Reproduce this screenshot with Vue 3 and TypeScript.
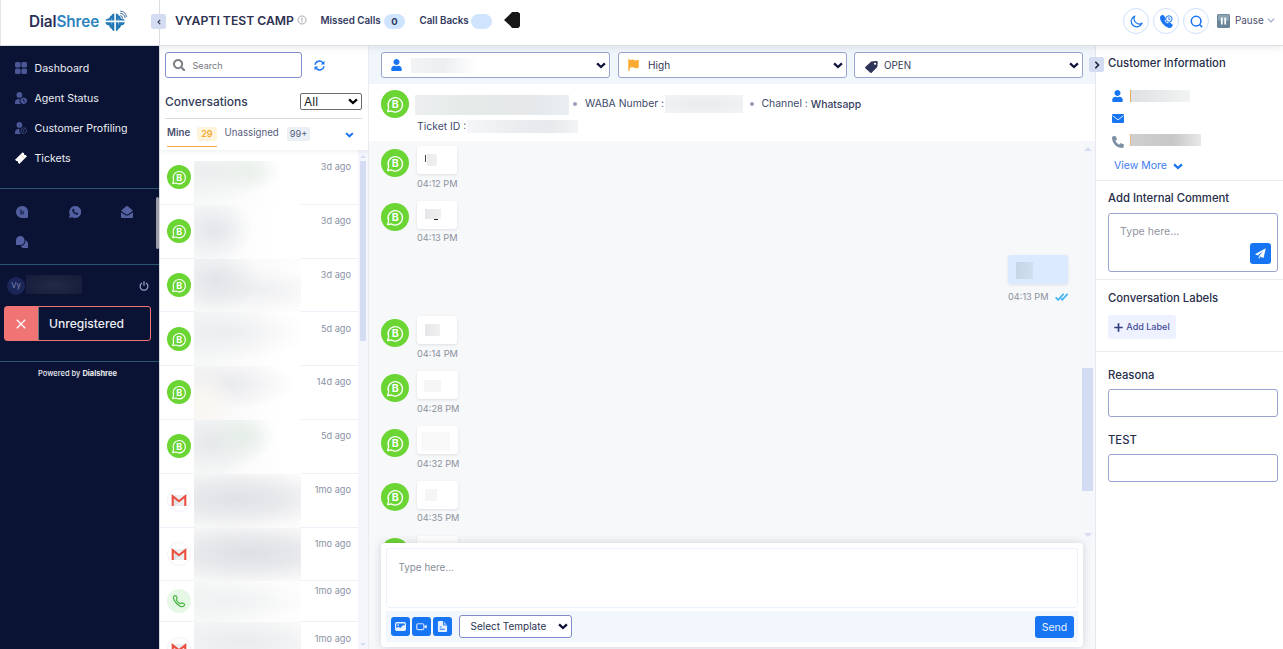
<script setup lang="ts">
interface NavItem { label: string; icon: string }
interface Conversation { kind: 'wab' | 'gmail' | 'phone'; ago: string; tone: string }
interface Message { time?: string; out?: boolean; mask: string }

const nav: NavItem[] = [
  { label: 'Dashboard', icon: 'i-grid' },
  { label: 'Agent Status', icon: 'i-agent' },
  { label: 'Customer Profiling', icon: 'i-profile' },
  { label: 'Tickets', icon: 'i-ticket' },
]
const channels = ['i-blog', 'i-wa', 'i-mailopen', 'i-chats']

const conversations: Conversation[] = [
  { kind: 'wab', ago: '3d ago', tone: 't1' },
  { kind: 'wab', ago: '3d ago', tone: 't2' },
  { kind: 'wab', ago: '3d ago', tone: 't3' },
  { kind: 'wab', ago: '5d ago', tone: 't4' },
  { kind: 'wab', ago: '14d ago', tone: 't5' },
  { kind: 'wab', ago: '5d ago', tone: 't6' },
  { kind: 'gmail', ago: '1mo ago', tone: 't7' },
  { kind: 'gmail', ago: '1mo ago', tone: 't8' },
  { kind: 'phone', ago: '1mo ago', tone: 't9' },
  { kind: 'gmail', ago: '1mo ago', tone: 't10' },
]

const messages: Message[] = [
  { time: '04:12 PM', mask: 'm1' },
  { time: '04:13 PM', mask: 'm2' },
  { time: '04:13 PM', out: true, mask: 'm3' },
  { time: '04:14 PM', mask: 'm4' },
  { time: '04:28 PM', mask: 'm5' },
  { time: '04:32 PM', mask: 'm6' },
  { time: '04:35 PM', mask: 'm7' },
  { mask: 'm5' },
]
</script>

<template>
  <div class="app">
    <svg class="defs" aria-hidden="true">
      <symbol id="i-grid" viewBox="0 0 12 12"><rect width="5.6" height="5.6" rx="1.6" /><rect x="6.4" width="5.6" height="5.6" rx="1.6" /><rect y="6.4" width="5.6" height="5.6" rx="1.6" /><rect x="6.4" y="6.4" width="5.6" height="5.6" rx="1.6" /></symbol>
      <symbol id="i-agent" viewBox="0 0 12 12"><circle cx="4.4" cy="2.9" r="2.9" /><path d="M0 12V10.2C0 8 1.8 6.7 4.6 6.7c-.6 2 0 4 1.4 5.3z" /><path fill-rule="evenodd" d="M8.7 5.4a3.3 3.3 0 1 0 .01 0zM8.2 7h.9v1.7l1.2.7-.4.7-1.7-1z" /></symbol>
      <symbol id="i-profile" viewBox="0 0 12 12"><circle cx="4.4" cy="2.9" r="2.9" /><path d="M0 12V10.2C0 8 1.8 6.7 4.6 6.7c-.6 2 0 4 1.4 5.3z" /><circle cx="8.8" cy="8.6" r="2.7" fill="none" stroke="currentColor" stroke-width=".9" stroke-dasharray="3.4 .6" /><path d="M8.8 7.1v1.7l-1.2.6" fill="none" stroke="currentColor" stroke-width=".8" /></symbol>
      <symbol id="i-ticket" viewBox="0 0 12 12"><path d="M0 7.8 7.7.2l1.4 1.3a1.2 1.2 0 0 0 1.5 1.5L12 4.2 4.3 11.9 3 10.6a1.2 1.2 0 0 0-1.6-1.5z" /><path d="m5.4 2.6 4 4" stroke="#e58b6a" stroke-width=".7" stroke-dasharray="1.2 .7" /></symbol>
      <symbol id="i-blog" viewBox="0 0 12 12"><path d="M6 0h.5A5.6 5.6 0 0 1 12 6v5a1 1 0 0 1-1 1H6A6 6 0 0 1 6 0z" /><path d="M3.8 3.2h1.900v1.800h2.400v3.500H3.800z" fill="#2c3769" /></symbol>
      <symbol id="i-wa" viewBox="0 0 12 12"><path d="M6.1 0a6 6 0 1 1-2.8 11.2L0 12l.9-3.2A6 6 0 0 1 6.1 0z" /><path d="M4 2.9c.5-.3.9-.2 1.1.3l.4 1c.1.4-.5.8-.4 1 .4.8 1 1.4 1.9 1.8.3.1.6-.7 1-.5l1.1.6c.4.3-.2 1.6-1.1 1.7C5.800 9 3 6.200 3.200 4.300c0-.6.3-1.100.8-1.400z" fill="#101a3c" /></symbol>
      <symbol id="i-mailopen" viewBox="0 0 12 12"><path d="M0 4.700 4.800.6a1.800 1.800 0 0 1 2.400 0L12 4.700 7 8.200a1.800 1.800 0 0 1-2 0z" /><path d="M0 6.200 4.600 9.300a2.500 2.500 0 0 0 2.800 0L12 6.200V11a1 1 0 0 1-1 1H1a1 1 0 0 1-1-1z" /></symbol>
      <symbol id="i-chats" viewBox="0 0 12 12"><path d="M4.300 0a4.300 4.500 0 0 1 0 9H.6a.6.6 0 0 1-.6-.6V4.500A4.300 4.500 0 0 1 4.300 0z" /><path d="M9.400 4.300c1.600.5 2.600 2 2.600 3.700v3.400a.6.6 0 0 1-.6.6H8.200c-1.600 0-2.700-.8-3.300-2.100 2.800-.1 4.700-2.500 4.500-5.600z" /></symbol>
      <symbol id="i-user" viewBox="0 0 448 512"><path d="M224 256c70.700 0 128-57.300 128-128S294.700 0 224 0 96 57.300 96 128s57.300 128 128 128zm89.600 32h-16.700c-22.200 10.200-46.900 16-72.900 16s-50.600-5.800-72.900-16h-16.700C60.200 288 0 348.200 0 422.400V464c0 26.500 21.500 48 48 48h352c26.500 0 48-21.500 48-48v-41.600c0-74.200-60.200-134.400-134.400-134.400z" /></symbol>
      <symbol id="i-search" viewBox="0 0 512 512"><path d="M505 442.700L405.300 343c-4.500-4.500-10.600-7-17-7H372c27.600-35.300 44-79.700 44-128C416 93.100 322.900 0 208 0S0 93.100 0 208s93.100 208 208 208c48.300 0 92.700-16.400 128-44v16.300c0 6.400 2.500 12.500 7 17l99.700 99.700c9.400 9.400 24.600 9.400 33.900 0l28.300-28.300c9.400-9.400 9.400-24.600.1-34zM208 336c-70.700 0-128-57.200-128-128 0-70.700 57.200-128 128-128 70.700 0 128 57.200 128 128 0 70.700-57.200 128-128 128z" /></symbol>
      <symbol id="i-phone" viewBox="0 0 512 512"><path d="M164.900 24.600c-7.700-18.600-28-28.500-47.400-23.200l-88 24C12.100 30.200 0 46 0 64C0 311.400 200.600 512 448 512c18 0 33.800-12.100 38.600-29.500l24-88c5.300-19.400-4.600-39.700-23.200-47.400l-96-40c-16.300-6.800-35.200-2.100-46.300 11.600L304.700 368C234.300 334.700 177.300 277.700 144 207.300L193.300 167c13.700-11.200 18.400-30 11.600-46.300l-40-96z" /></symbol>
      <symbol id="i-flag" viewBox="0 0 448 512"><path d="M64 32C64 14.300 49.700 0 32 0S0 14.300 0 32V480c0 17.700 14.300 32 32 32s32-14.300 32-32V378l64.300-16.100c41.100-10.300 84.600-5.500 122.500 13.400c44.200 22.100 95.500 24.800 141.700 7.400l34.700-13c12.500-4.700 20.800-16.600 20.800-30V66.100c0-23-24.200-38-44.800-27.700l-9.600 4.800c-46.300 23.200-100.800 23.200-147.100 0c-35.100-17.600-75.400-22-113.500-12.500L64 48V32z" /></symbol>
      <symbol id="i-tag" viewBox="0 0 13 12"><path fill-rule="evenodd" d="M6.300.5 11.400 0c.9 0 1.300.5 1.300 1.300l-.4 4.800-5.400 5.500c-.6.6-1.200.6-1.800 0L.5 7.400C0 6.900 0 6.200.5 5.700zM10 1.700a1 1 0 1 0 .01 0z" /></symbol>
      <symbol id="i-down" viewBox="0 0 10 7"><path d="m1.100 1.300 3.900 3.700 3.900-3.700" fill="none" stroke="currentColor" stroke-width="2.300" /></symbol>
      <symbol id="i-wab" viewBox="0 0 28 28"><circle cx="14" cy="14" r="14" fill="#6bd534" /><path d="M7.700 17.700A7.200 7.200 0 1 1 10.600 21L6.600 21.700z" fill="none" stroke="#fff" stroke-width="1.300" stroke-linejoin="round" /><text x="14.200" y="18.300" text-anchor="middle" font-family="Inter, sans-serif" font-size="10.500" font-weight="700" fill="#fff">B</text></symbol>
      <symbol id="i-gmail" viewBox="0 0 24 24"><circle cx="12" cy="12" r="11.500" fill="#fff" stroke="#f1f1fb" /><path d="M5 7h14v11H5z" fill="#eceff1" /><path d="m5 8 7 5.500L8 18H5z" fill="#dfe3e6" /><path d="M5.700 18V8.200l6.300 5 6.300-5V18" fill="none" stroke="#ea4f40" stroke-width="2.100" /></symbol>
      <symbol id="i-call" viewBox="0 0 24 24"><circle cx="12" cy="12" r="12" fill="#e6f8e5" /><path d="M7 7.200c.9-.9 1.900-.9 2.300 0l.8 1.700c.3.700-1 1.400-.7 2 .8 1.700 2 2.900 3.700 3.700.6.3 1.300-1 2-.7l1.900.9c.8.400.8 1.300 0 2.100-1 1-2.700.9-4.300 0-2.300-1.200-4-2.900-5.300-5.300-.9-1.700-1.300-3.500-.4-4.400z" fill="none" stroke="#4cb648" stroke-width="1.200" /></symbol>
    </svg>

    <header class="top">
      <div class="brand">
        <span class="name">Dial<b>Shree</b></span>
        <svg class="mark" viewBox="0 0 22 22">
          <path d="M9.300 3.500v7.100H.4c.2-1.600 2-2.200 3.900-2.200.2-1.800 1-2.800 2.300-3 .3-1.200 1.300-1.900 2.700-1.900zM10.900 3.500c1.400 0 2.400.7 2.700 1.900 1.300.2 2.100 1.200 2.300 3 1.900 0 3.700.6 3.900 2.200h-8.900zM.4 12.200h8.900v8.700c-1.400 0-2.400-.7-2.700-2.400-1.300-.2-2.100-1.200-2.300-3C2.400 15.500.6 14.300.4 12.200zM19.800 12.200h-8.900v8.700c1.400 0 2.400-.7 2.700-2.400 1.300-.2 2.100-1.200 2.300-3 1.900 0 3.700-1.200 3.900-3.300z" fill="#2279b5" />
          <path d="M6.700 8.500v2.100M13.500 8.500v2.100M6.700 12.200v2.300M13.500 12.200v2.300" stroke="#9cc8e6" stroke-width=".7" />
          <path d="M15.200 5.700a2.400 2.400 0 0 1 2.400 2.400M15.200 3.300A4.800 4.800 0 0 1 20 8.100M15.200 1a7 7 0 0 1 6.300 6" fill="none" stroke="#2d5f8f" stroke-width=".9" />
        </svg>
      </div>
      <button class="toggle left"><svg viewBox="0 0 6 8"><path d="M4.200 1.800 2 4l2.200 2.200" fill="none" stroke="#3c3f55" stroke-width="1.200" /></svg></button>
      <h1>VYAPTI TEST CAMP</h1>
      <svg class="info" viewBox="0 0 10 10"><circle cx="5" cy="5" r="4" fill="none" stroke="#9a9ba5" stroke-width="1" stroke-dasharray="2.600 .5" /><path d="M5 2.600v3.200M5 6.500v1" stroke="#9a9ba5" stroke-width="1" /></svg>
      <span class="stat missed">Missed Calls</span><span class="pill">0</span>
      <span class="stat backs">Call Backs</span><span class="pill"></span>
      <svg class="blob" viewBox="0 0 16 16"><path d="M0 8 6.500 1.700 8 0h6l2 1.500V14l-1.500 2H8l-1.500-2z" fill="#171717" /></svg>
      <div class="spacer"></div>
      <button class="round"><svg viewBox="0 0 14 14"><path d="M5.200 1.100A6 6 0 1 0 13 8.700 5.600 5.600 0 0 1 5.200 1.100z" fill="none" stroke="#1b74f0" stroke-width="1.300" stroke-linejoin="round" /></svg></button>
      <button class="round"><svg viewBox="0 0 14 14"><path d="M3.900.8C3.500.2 2.900.1 2.300.4L1 1.300C.4 1.800.3 2.600.5 3.600 1.600 8.400 5.200 12.400 10 13.500c1 .2 1.800 0 2.300-.7l.8-1.200c.4-.6.200-1.200-.4-1.600L10.600 8.600c-.5-.3-1.100-.2-1.500.2l-.8.900C6.600 8.800 5.300 7.400 4.400 5.700l.9-.8c.4-.4.5-1 .2-1.500z" fill="#1774f2" stroke="#1774f2" stroke-width="1" /><circle cx="9.600" cy="4.300" r="3.500" fill="#e6f0ff" stroke="#1774f2" stroke-width="1" /><path d="M9.500 2.400v2.100l1.500.6" fill="none" stroke="#1774f2" stroke-width=".9" /></svg></button>
      <button class="round"><svg viewBox="0 0 14 14"><circle cx="6.600" cy="6.600" r="5.200" fill="none" stroke="#1b74f0" stroke-width="1.700" /><path d="m10.200 10.200 2.900 2.900" stroke="#1b74f0" stroke-width="1.700" /></svg></button>
      <svg class="pause" viewBox="0 0 13 14"><rect width="13" height="14" rx="1.500" fill="#6b8598" /><rect x="1" y=".8" width="11" height="6" rx="1" fill="#8ba3b3" /><path d="M4.800 3.500v7M8.200 3.500v7" stroke="#fff" stroke-width="1.800" /></svg>
      <span class="ptext">Pause</span>
      <svg class="pchev" viewBox="0 0 8 5"><path d="m.8.7 3.200 3.200L7.200.7" fill="none" stroke="#98a7c6" stroke-width="1.200" /></svg>
    </header>

    <div class="body">
      <aside class="side">
        <nav>
          <a v-for="n in nav" :key="n.label" :class="{ lit: n.icon === 'i-ticket' }"><svg><use :href="'#' + n.icon" /></svg>{{ n.label }}</a>
        </nav>
        <div class="channels">
          <svg v-for="c in channels" :key="c"><use :href="'#' + c" /></svg>
          <i class="sbar"></i>
        </div>
        <div class="account">
          <span class="avatar">Vy</span><span class="uname"></span>
          <svg class="power" viewBox="0 0 10 10"><path d="M3 1.900a3.900 3.900 0 1 0 4 0M5 .3v4.500" fill="none" stroke="#9ba3d2" stroke-width="1.200" /></svg>
        </div>
        <div class="unreg">
          <span class="x"><svg viewBox="0 0 10 10"><path d="m.8.8 8.400 8.400M9.200.8.8 9.200" stroke="#fff" stroke-width="1.300" /></svg></span>
          <span class="ulabel">Unregistered</span>
        </div>
        <div class="powered">Powered by <b>Dialshree</b></div>
      </aside>

      <section class="list">
        <div class="searchrow">
          <div class="search"><svg><use href="#i-search" /></svg>Search</div>
          <svg class="sync" viewBox="0 0 12 12"><path d="M1.200 5.200A4.700 4.700 0 0 1 9.600 3M10.800 6.800A4.700 4.700 0 0 1 2.400 9" fill="none" stroke="#1774f2" stroke-width="1.600" /><path d="M11.400.8v4H7.400zM.6 11.200v-4h4z" fill="#1774f2" /></svg>
        </div>
        <div class="convhead"><span>Conversations</span><div class="allsel">All<svg><use href="#i-down" /></svg></div></div>
        <div class="tabs">
          <div class="tab on"><span>Mine</span><em>29</em></div>
          <div class="tab"><span>Unassigned</span><em>99+</em></div>
          <svg><use href="#i-down" /></svg>
        </div>
        <div class="convs">
          <div v-for="(c, i) in conversations" :key="i" class="conv" :class="c.kind">
            <svg v-if="c.kind === 'wab'"><use href="#i-wab" /></svg>
            <svg v-else-if="c.kind === 'gmail'"><use href="#i-gmail" /></svg>
            <svg v-else><use href="#i-call" /></svg>
            <div class="veil" :class="c.tone"></div>
            <time>{{ c.ago }}</time>
          </div>
          <div class="track"><i class="up"></i><i class="thumb"></i><i class="dn"></i></div>
        </div>
      </section>

      <main class="chat">
        <div class="filters">
          <div class="sel"><svg class="fi"><use href="#i-user" /></svg><span class="who"></span><svg class="dd"><use href="#i-down" /></svg></div>
          <div class="sel flag"><svg class="fi"><use href="#i-flag" /></svg>High<svg class="dd"><use href="#i-down" /></svg></div>
          <div class="sel tag"><svg class="fi"><use href="#i-tag" /></svg>OPEN<svg class="dd"><use href="#i-down" /></svg></div>
        </div>
        <div class="chead">
          <svg><use href="#i-wab" /></svg>
          <div>
            <div class="line1"><span class="cname"></span><i class="dot"></i><span class="waba">WABA Number :</span><span class="wnum"></span><i class="dot d2"></i><span>Channel : <b>Whatsapp</b></span></div>
            <div class="line2">Ticket ID :<span class="tid"></span></div>
          </div>
        </div>
        <div class="msgs">
          <div v-for="(m, i) in messages" :key="i" class="msg" :class="{ out: m.out }">
            <svg v-if="!m.out" class="av"><use href="#i-wab" /></svg>
            <div class="mcol">
              <div class="bubble" :class="{ wide: i > 3 }"><span class="mask" :class="m.mask"></span></div>
              <div v-if="m.time" class="mtime">{{ m.time }}<svg v-if="m.out" viewBox="0 0 13 8"><path d="m.6 4.400 2.500 2.500L8.700.9M6 5.500l1.200 1.300L12.600.9" fill="none" stroke="#3fb4ee" stroke-width="1.600" /></svg></div>
            </div>
          </div>
          <div class="ctrack"><i class="up"></i><i class="thumb"></i><i class="dn"></i></div>
        </div>
        <div class="composer">
          <div class="ta">Type here...</div>
          <div class="tools">
            <button class="tb"><svg viewBox="0 0 12 10"><path fill-rule="evenodd" d="M2 0h8a2 2 0 0 1 2 2v6a2 2 0 0 1-2 2H2a2 2 0 0 1-2-2V2a2 2 0 0 1 2-2zM1.400 7 3.800 5.300l2 1.200 2.800-3 2 .4V1.800H1.400zM3.400 2.600a.8.800 0 1 0 .01 0z" fill="#e6f0ff" /></svg></button>
            <button class="tb"><svg viewBox="0 0 12 10"><rect x=".8" y="2" width="7.800" height="6.400" rx="1.500" fill="none" stroke="#c9dcff" stroke-width="1.300" /><path d="m9.200 4.600 2.400-1.500v4.200L9.200 5.900z" fill="#fff" /></svg></button>
            <button class="tb"><svg viewBox="0 0 12 12"><path fill-rule="evenodd" d="M2.500 0h4v3.500c0 .9.500 1.400 1.400 1.400H11v5.600c0 .9-.6 1.500-1.500 1.500h-7C1.600 12 1 11.400 1 10.500v-9C1 .6 1.600 0 2.500 0zM3 6v1h2V6zm0 2.500v1h5.500v-1z" fill="#e6f0ff" /><path d="M7.500.5 10.700 4H7.500z" fill="#a9c8fb" /></svg></button>
            <div class="tpl">Select Template<svg><use href="#i-down" /></svg></div>
            <button class="send">Send</button>
          </div>
        </div>
      </main>

      <aside class="cust">
        <button class="toggle right"><svg viewBox="0 0 6 8"><path d="M1.300.8 4.500 4 1.300 7.200" fill="none" stroke="#1b1f3b" stroke-width="1.600" /></svg></button>
        <div class="sec s1">
          <h2>Customer Information</h2>
          <div class="crow"><svg class="cu"><use href="#i-user" /></svg><span class="v1"></span></div>
          <div class="crow"><svg class="ce" viewBox="0 0 12 9"><rect width="12" height="9" rx="1" fill="#1774f2" /><path d="m.6 1.800 5.400 4 5.400-4" fill="none" stroke="#d7e7ff" stroke-width="1" /></svg></div>
          <div class="crow"><svg class="cp"><use href="#i-phone" /></svg><span class="v2"></span></div>
          <a class="more">View More<svg><use href="#i-down" /></svg></a>
        </div>
        <div class="sec s2">
          <h2>Add Internal Comment</h2>
          <div class="cta">Type here...<button><svg viewBox="0 0 12 12"><path d="M11.800.2 0 6.900l3 1.300L9.300 2.900 4.500 8.800l4.800 2z M4.200 9v2.900l1.800-2.100z" fill="#fff" /></svg></button></div>
        </div>
        <div class="sec s3">
          <h2>Conversation Labels</h2>
          <button class="addl"><svg viewBox="0 0 9 9"><path d="M4.500.3v8.400M.3 4.500h8.400" stroke="#323d84" stroke-width="1.700" /></svg>Add Label</button>
        </div>
        <div class="s4">
          <h2>Reasona</h2><div class="inp"></div>
          <h2>TEST</h2><div class="inp"></div>
        </div>
      </aside>
    </div>
  </div>
</template>

<style>
html, body { margin: 0; overflow: hidden; background: #fff; }
</style>

<style scoped>
* { box-sizing: border-box; }
.app { width: 1283px; height: 649px; overflow: hidden; display: flex; flex-direction: column; font-family: Inter, sans-serif; font-size: 11px; color: #353d5c; background: #fff; }
.defs { position: absolute; width: 0; height: 0; }
svg { fill: currentColor; flex: none; display: block; }
button { border: 0; padding: 0; font: inherit; display: flex; align-items: center; justify-content: center; }
h1, h2 { margin: 0; }

.top { height: 46px; flex: none; position: relative; z-index: 3; display: flex; align-items: center; padding-bottom: 5px; background: #fff; border-bottom: 1px solid #dddee3; box-shadow: 0 1px 8px rgba(60, 64, 90, .13); }
.brand { width: 160px; height: 46px; margin-bottom: -5px; padding: 0 0 2px 28px; flex: none; display: flex; align-items: center; border-left: 1px solid #e4e4e8; border-right: 1px solid #dcdde2; }
.name { width: 72px; font-size: 15.300px; font-weight: 600; letter-spacing: -.1px; color: #2a3058; white-space: nowrap; }
.name b { font-weight: 600; color: #2d83c0; }
.mark { width: 22px; height: 22px; margin-left: 4px; margin-top: -1px; }
.toggle { position: absolute; width: 15px; height: 15px; border-radius: 2px; background: #d4dcf2; }
.toggle svg { width: 6px; height: 8px; }
.left { left: 151px; top: 14px; }
h1 { width: 121px; margin-left: 15px; font-size: 12.200px; font-weight: 600; color: #2d3250; white-space: nowrap; }
.info { width: 10px; height: 10px; margin-left: 1px; }
.stat { font-size: 9.800px; font-weight: 600; color: #343a5e; white-space: nowrap; }
.missed { width: 63.500px; margin-left: 13.500px; }
.backs { width: 51px; margin-left: 14.500px; }
.pill { width: 21px; height: 15px; border-radius: 8px; background: #cfe4ff; font-size: 9.500px; font-weight: 700; text-align: center; line-height: 15px; margin-top: 2px; }
.blob { width: 16px; height: 16px; margin-left: 12.500px; }
.spacer { flex: 1; }
.round { width: 26px; height: 26px; margin: 2px 0 0 4px; border: 1px solid #cfe1fb; border-radius: 50%; background: #fff; }
.round svg { width: 13px; height: 13px; }
.pause { width: 13px; height: 14px; margin: 2px 5px 0 8px; }
.ptext { width: 29px; font-size: 9.900px; color: #474d68; }
.pchev { width: 8px; height: 5px; margin: 1px 8px 0 3px; }

.body { flex: 1; min-height: 0; display: grid; grid-template-columns: 160px 209px 726px 188px; }

.side { background: #0a1333; border-right: 1px solid #d9dbe3; color: #eceef5; position: relative; z-index: 4; }
nav { height: 143px; padding-top: 7px; border-bottom: 1px solid #2a5673; }
nav a { height: 30px; padding-left: 15px; display: flex; align-items: center; gap: 7.500px; font-size: 10.600px; }
nav svg { width: 12px; height: 12px; color: #4b5796; }
nav .lit svg { color: #fff; }
.channels { height: 76px; position: relative; padding: 17px 0 0 16px; display: grid; grid-template-columns: 53px 52px 40px; grid-auto-rows: 30px; border-bottom: 1px solid #2a5673; color: #5361a2; }
.channels svg { width: 12px; height: 12px; }
.sbar { position: absolute; right: 0; top: 8px; width: 3px; height: 52px; border-radius: 2px; background: #9c9ca8; }
.account { height: 41px; padding-left: 7px; display: flex; align-items: center; }
.avatar { width: 18px; height: 18px; border-radius: 50%; background: #1b2658; color: #7c87bb; font-size: 7.700px; line-height: 18px; text-align: center; }
.uname { width: 56px; height: 19px; margin: -2px 0 0 1px; background: radial-gradient(ellipse at 50% 55%, #222a48, #151d3a 90%); }
.power { width: 10px; height: 10px; margin-left: 57px; }
.unreg { width: 147px; height: 35px; margin: 0 0 0 4px; border: 1px solid #f07474; border-radius: 3px; display: flex; align-items: stretch; }
.x { width: 34px; background: #f07474; display: flex; align-items: center; justify-content: center; border-right: 1px solid #6c7187; padding-right: 1px; }
.x svg { width: 10px; height: 10px; }
.ulabel { padding-left: 10px; font-size: 12.100px; line-height: 33px; font-weight: 500; }
.powered { margin-top: 20px; padding: 7px 4px 0 0; border-top: 1px solid #2a5673; font-size: 7.500px; line-height: 9px; text-align: center; white-space: nowrap; font-weight: 500; }
.powered b { font-weight: 700; }

.list { display: flex; flex-direction: column; min-height: 0; overflow: hidden; border-right: 1px solid #e9ebf0; background: #fff; }
.searchrow { height: 39px; padding: 6px 0 0 5px; display: flex; gap: 12px; }
.search { width: 137px; height: 26px; display: flex; align-items: center; gap: 7.500px; padding-left: 6.500px; border: 1px solid #8490c9; border-radius: 3px; color: #77797f; font-size: 9.100px; }
.search svg { width: 12.500px; height: 12.500px; color: #7d7f86; }
.sync { width: 11px; height: 11px; margin-top: 8px; }
.convhead { height: 34px; margin: 0 6px 0 5px; display: flex; align-items: center; justify-content: space-between; border-bottom: 1px solid #dcdde0; font-size: 12px; font-weight: 500; color: #333b59; flex: none; }
.allsel { width: 62px; height: 17px; padding: 0 3px; border: 1px solid #6c6c6c; border-radius: 2px; display: flex; align-items: center; justify-content: space-between; font-size: 12px; font-weight: 400; color: #222; }
.allsel svg { width: 10px; height: 7px; color: #000; }
.tabs { height: 31px; flex: none; padding: 0 7px; display: flex; gap: 8px; box-shadow: 0 2px 4px rgba(70, 80, 120, .08); position: relative; z-index: 1; font-size: 9.700px; color: #565d7d; }
.tab { height: 28px; display: flex; padding-top: 7px; line-height: 13px; gap: 8px; }
.tab.on { border-bottom: 1px solid #f5a835; gap: 7px; }
.tab.on span { font-weight: 600; color: #4a506e; }
.tab em { font-style: normal; font-size: 9.200px; height: 14px; line-height: 14px; margin-top: 1px; padding: 0 3px; border-radius: 2px; background: #eaf0f6; }
.tab.on em { background: #fff3dc; color: #f5a020; padding: 0 4px; font-weight: 500; }
.tabs > svg { width: 9px; height: 6px; margin: 13px 7px 0 auto; color: #1774f2; }
.convs { flex: 1; min-height: 0; overflow: hidden; position: relative; padding-top: 1px; }
.conv { height: 53.800px; width: 198px; padding-left: 7px; display: flex; border-bottom: 1px solid #edf0f7; }
.conv > svg { width: 24px; height: 24px; margin-top: 14.200px; }
.conv.phone { height: 41px; }
.conv.phone > svg { margin-top: 7.500px; }
.conv time { margin: 10.300px 7px 0 auto; font-size: 9.200px; line-height: 12px; color: #8a92a3; }
.conv.phone time { margin-top: 3.500px; }
.veil { width: 107px; height: 54.500px; margin-left: 3px; position: relative; background-color: #fbfbfc; }
.phone .veil { height: 42px; }
.t1 { margin-top: 10px; height: 44.500px; background: radial-gradient(34px 22px at 54px 10px, #e9f0eb, transparent), radial-gradient(64px 32px at 16px 10px, #ecedee, transparent), linear-gradient(90deg, #f6f7f7, #fff 80%); }
.t2 { background: radial-gradient(38px 32px at 20px 25px, #e3e5ea, transparent), linear-gradient(90deg, #f6f7f7, #fff 75%); }
.t3 { background: radial-gradient(44px 32px at 22px 21px, #e1e3e8, transparent), radial-gradient(74px 22px at 60px 31px, #eeeff1, transparent), linear-gradient(90deg, #f5f6f6, #fdfdfd); }
.t4 { background: radial-gradient(84px 30px at 28px 20px, #ecedef, transparent), linear-gradient(90deg, #f5f6f6, #fff 80%); }
.t5 { background: radial-gradient(34px 30px at 8px 34px, #faf7f1, transparent), radial-gradient(66px 26px at 34px 18px, #e9eaed, transparent), linear-gradient(90deg, #f6f6f6, #fff 80%); }
.t6 { background: radial-gradient(34px 26px at 48px 16px, #e5eee8, transparent), radial-gradient(50px 34px at 20px 22px, #e5e7ea, transparent), linear-gradient(90deg, #f5f6f6, #fff 85%); }
.t7 { background: radial-gradient(100px 30px at 42px 25px, #e0e1e6, #e8e9ec 45%, transparent), linear-gradient(90deg, #f5f6f6, #fbfbfb); }
.t8 { background: radial-gradient(104px 30px at 54px 25px, #dedfe4, #e7e8eb 48%, transparent), linear-gradient(90deg, #f5f6f6, #f9f9f9); }
.t9 { background: radial-gradient(80px 22px at 34px 20px, #eff1f2, transparent), linear-gradient(90deg, #f5f6f6, #fdfdfd 80%); }
.t10 { background: radial-gradient(90px 26px at 50px 20px, #e9ebed, transparent), linear-gradient(90deg, #f4f5f6, #fafafa); }
.track { position: absolute; right: 0; top: 0; width: 10px; height: 100%; background: #f4f6fc; }
.track .thumb { position: absolute; left: 2px; top: 11px; width: 6px; height: 180px; background: #d3dcf2; }
.up, .dn { position: absolute; border: 3px solid transparent; }
.up { left: 2px; top: 2px; border-bottom-color: #d3dcf2; }
.dn { left: 2px; bottom: 0; border-top-color: #d3dcf2; }

.chat { display: flex; flex-direction: column; min-height: 0; min-width: 0; background: #f6f8fa; }
.filters { height: 38px; flex: none; padding: 6px 12px; display: flex; gap: 8px; background: #f1f6fc; }
.sel { width: 229px; flex: none; height: 26px; padding: 0 3px 0 9px; display: flex; align-items: center; border: 1px solid #99a3cf; border-radius: 3px; background: #fff; font-size: 10.100px; color: #343a55; }
.sel.tag { margin-left: -1px; font-size: 9.800px; padding-left: 10px; }
.fi { width: 11px; height: 12px; margin-right: 13px; color: #1774f2; }
.flag { padding-left: 8px; }
.flag .fi { color: #fbab32; width: 13px; margin-right: 8px; }
.tag .fi { width: 13px; margin: 3px 6px 0 0; color: #2e3457; height: 12px; }
.dd { width: 10px; height: 7px; margin-left: auto; color: #10143a; }
.who { width: 65px; height: 15px; margin-left: -4px; background: linear-gradient(90deg, #f2f3f4, #eceef0 50%, #fff); }
.chead { height: 57px; flex: none; padding: 6px 0 0 12px; display: flex; gap: 6px; background: #fff; font-size: 10.400px; color: #414a6c; }
.chead > svg { width: 28px; height: 28px; }
.line1 { height: 30px; display: flex; align-items: center; white-space: nowrap; }
.line1 > span:not(.cname) { margin-top: -3px; }
.line1 b { font-weight: 500; color: #3a4160; position: relative; top: 1px; }
.cname { width: 154px; height: 20px; background: linear-gradient(90deg, #eceeef, #e6ebe9 30%, #e5e7e9 70%, #eaeff2); }
.dot { width: 4px; height: 4px; margin: -2px 8px 0 4px; border-radius: 50%; background: #9ba0ba; }
.waba { width: 80px; }
.wnum { width: 78px; height: 18px; background: radial-gradient(ellipse, #e9eaed, #f3f4f6); margin-left: 0; }
.d2 { margin: -2px 7.500px 0 7px; }
.line2 { height: 14px; margin: -1px 0 0 2px; display: flex; align-items: center; font-size: 10.400px; }
.tid { width: 111px; height: 13px; margin-left: 1px; background: linear-gradient(90deg, #f5f6f7, #eaebee 50%, #e8e9ec 75%, #f3f4f5); }
.msgs { height: 402px; flex: none; padding: 5px 27px 0 12px; overflow: hidden; position: relative; }
.msg { height: 54.900px; display: flex; gap: 8px; }
.msg:first-child, .msg:nth-child(2) { height: 54.500px; }
.msg.out { height: 61px; justify-content: flex-end; }
.av { width: 28px; height: 28px; margin-top: 2.800px; }
.bubble { width: 40px; height: 28px; padding: 8px; border-radius: 3px; background: #fff; box-shadow: 0 1px 3px rgba(60, 70, 90, .13); display: flex; }
.bubble.wide { width: 41px; }
.out .bubble { width: 60px; height: 29px; background: #dbeafe; }
.mtime { margin-top: 3.800px; font-size: 9.200px; line-height: 12px; color: #8c919c; display: flex; align-items: center; white-space: nowrap; }
.out .mtime { margin-top: 7px; }
.mtime svg { width: 13px; height: 8px; margin-left: 6px; }
.mask { width: 15px; height: 12px; background: linear-gradient(90deg, #e6e6e8, #f0f0f1); }
.m1 { width: 12px; background: linear-gradient(#444, #444) 0 1px / 1px 7px no-repeat, linear-gradient(90deg, #fff 2px, #ebebed 2px, #f0f0f1); }
.m2 { width: 16px; height: 11px; background: linear-gradient(#222, #222) 9px 10px / 4px 1px no-repeat, linear-gradient(90deg, #e6e6e8, #f0f0f1) 0 0 / 16px 10px no-repeat; }
.m3 { width: 17px; height: 17px; background: linear-gradient(90deg, #c6d5e5, #d0dff0); margin-top: -1px; }
.m5 { width: 17px; background: #f6f6f7; margin: 1px 0 0 -1px; }
.m6 { width: 29px; height: 19px; margin: -2px 0 0 -4px; background: #f9f9fa; flex: none; }
.m7 { width: 12px; background: #f5f5f6; }
.ctrack { position: absolute; right: 0; top: 0; width: 13px; height: 100%; background: #f5f7fb; }
.ctrack .thumb { position: absolute; left: 0; top: 227px; width: 11px; height: 123px; background: #d3dcf2; }
.ctrack .up, .ctrack .dn { border-width: 4px; left: 2px; }
.ctrack .up { top: 2px; }
.ctrack .dn { bottom: 2px; }
.composer { width: 702px; height: 104px; flex: none; margin-left: 12px; padding: 5px; background: #fff; border-radius: 4px; box-shadow: 0 0 9px rgba(60, 64, 80, .2); position: relative; }
.ta { height: 60px; padding: 11px 11.500px; border: 1px solid #ecf2fc; border-radius: 3px; font-size: 9.900px; line-height: 14px; color: #8b8f99; }
.tools { height: 31px; margin-top: 3px; padding: 0 4px 0 5px; display: flex; align-items: center; gap: 2px; background: #f2f7fd; }
.tb { width: 19px; height: 19px; border-radius: 3px; background: #1774f2; }
.tb svg { width: 11px; height: 11px; }
.tpl { width: 113px; height: 23px; margin-left: 5px; padding: 0 3px 1px 10.500px; display: flex; align-items: center; justify-content: space-between; border: 1px solid #7f8cc9; border-radius: 3px; background: #fff; font-size: 10px; color: #2c3152; white-space: nowrap; }
.tpl svg { width: 10px; height: 7px; color: #0b0f30; }
.send { width: 39px; height: 22px; margin: 1px 0 0 auto; border-radius: 3px; background: #1774f2; color: #e9f2ff; font-size: 10.500px; }

.cust { position: relative; border-left: 1px solid #e6e8ee; background: #fff; z-index: 1; min-width: 0; }
.right { left: -7px; top: 11px; }
h2 { font-size: 11.300px; line-height: 16px; font-weight: 500; color: #272d49; white-space: nowrap; }
.sec { padding-left: 12px; border-bottom: 1px solid #ebecf0; }
.s1 { height: 135px; padding-top: 9px; }
.s1 h2 { margin-bottom: 14px; }
.crow { height: 22.500px; padding-left: 4px; display: flex; align-items: center; gap: 6px; }
.cu { width: 11px; height: 12px; margin-right: 1px; color: #1774f2; }
.ce { width: 12px; height: 9px; }
.cp { width: 12px; height: 12px; margin-top: 2px; color: #7d8fa3; }
.v1 { width: 60px; height: 12px; border-left: 1px solid #e9a860; background: linear-gradient(90deg, #dee1e2, #f1f4f3); }
.v2 { width: 71px; height: 12px; margin-top: -2px; border-left: 1px solid #e9b98a; background: linear-gradient(90deg, #cfcfcf, #c8c7c7 60%, #e8e8e8); }
.more { padding-left: 6px; margin-top: 6px; display: flex; align-items: center; font-size: 10.500px; line-height: 14px; color: #3d7bf0; }
.more svg { width: 10px; height: 7px; margin-left: 6px; margin-top: 1px; color: #1b74f0; }
.s2 { height: 99px; padding-top: 9px; }
.cta { width: 170px; height: 59px; margin-top: 7px; padding: 10px 11px; position: relative; border: 1px solid #99a3cf; border-radius: 3px; font-size: 10.600px; line-height: 15px; color: #93969f; }
.cta button { position: absolute; right: 6px; bottom: 7px; width: 21px; height: 21px; border-radius: 3px; background: #1774f2; }
.cta button svg { width: 11px; height: 11px; }
.s3 { height: 72px; padding-top: 10px; }
.addl { width: 68px; height: 24px; margin-top: 9px; gap: 3px; border-radius: 3px; background: #eef1ff; color: #424d93; font-size: 9.050px; line-height: 12px; white-space: nowrap; font-weight: 500; }
.addl svg { width: 9px; height: 9px; }
.s4 { padding: 15px 0 0 12px; }
.inp { width: 170px; height: 28px; margin: 6px 0 15px; border: 1px solid #99a3cf; border-radius: 3px; }
</style>
